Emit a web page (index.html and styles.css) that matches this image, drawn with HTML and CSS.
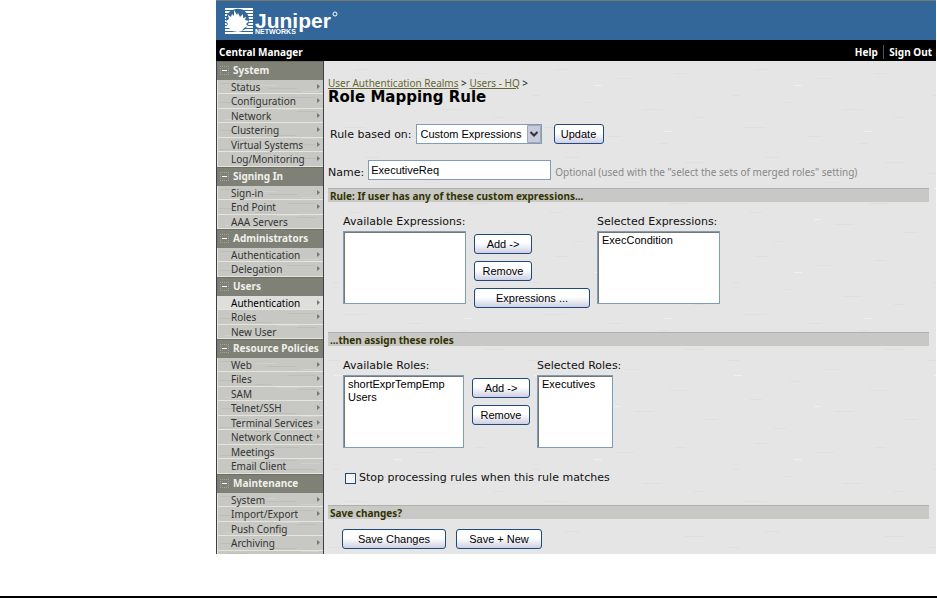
FILE: index.html
```html
<!DOCTYPE html>
<html lang="en">
<head>
    <meta charset="UTF-8">
    <meta name="viewport" content="width=device-width, initial-scale=1.0">
    <title>Central Manager - Role Mapping Rule</title>
    <link rel="stylesheet" href="styles.css">
</head>
<body>
    <div class="app">
        <header class="brand">
            <svg class="logo" width="118" height="32" viewBox="0 0 118 32" role="img" aria-label="Juniper Networks">
                <path fill="#fff" d="M0 2h28v2H0zM0 5h28v2H0zM0 8h28v2H0zM0 11h28v2H0zM0 14h28v2H0zM0 17h28v2H0zM0 20h28v2H0zM0 23h28v2H0zM0 26h28v2H0z"/>
                <path fill="#369" d="M11 3c7-1 13 4 13 11 0 5-3 9-7 11H9C4 23 1 19 1 14 1 8 5 4 11 3z"/>
                <path fill="#fff" d="M9 4l3 5 1-2 2 4 3-3 0 4 3-1-1 3 4 1-3 3 2 2-4 2-2 3-4 1-6-1-3-3-3-1 2-3-2-3 3-2-1-4 3 2 1-3 2 2z"/>
                <text x="30" y="22" class="logo-name">Juniper</text>
                <text x="30" y="28" class="logo-sub">NETWORKS</text>
                <circle cx="110" cy="8" r="2" fill="none" stroke="#fff"/>
            </svg>
        </header>
        <div class="topbar">
            <span>Central Manager</span>
            <nav class="toplinks">
                <a href="#">Help</a>
                <a href="#">Sign Out</a>
            </nav>
        </div>
        <div class="columns">
            <nav class="sidebar">
                <h2>System</h2>
                <ul>
                    <li><a class="more" href="#">Status</a></li>
                    <li><a class="more" href="#">Configuration</a></li>
                    <li><a class="more" href="#">Network</a></li>
                    <li><a class="more" href="#">Clustering</a></li>
                    <li><a class="more" href="#">Virtual Systems</a></li>
                    <li><a class="more" href="#">Log/Monitoring</a></li>
                </ul>
                <h2>Signing In</h2>
                <ul>
                    <li><a class="more" href="#">Sign-in</a></li>
                    <li><a class="more" href="#">End Point</a></li>
                    <li><a href="#">AAA Servers</a></li>
                </ul>
                <h2>Administrators</h2>
                <ul>
                    <li><a class="more" href="#">Authentication</a></li>
                    <li><a class="more" href="#">Delegation</a></li>
                </ul>
                <h2>Users</h2>
                <ul>
                    <li class="current"><a class="more" href="#">Authentication</a></li>
                    <li><a class="more" href="#">Roles</a></li>
                    <li><a href="#">New User</a></li>
                </ul>
                <h2>Resource Policies</h2>
                <ul>
                    <li><a class="more" href="#">Web</a></li>
                    <li><a class="more" href="#">Files</a></li>
                    <li><a class="more" href="#">SAM</a></li>
                    <li><a class="more" href="#">Telnet/SSH</a></li>
                    <li><a class="more" href="#">Terminal Services</a></li>
                    <li><a class="more" href="#">Network Connect</a></li>
                    <li><a href="#">Meetings</a></li>
                    <li><a href="#">Email Client</a></li>
                </ul>
                <h2>Maintenance</h2>
                <ul>
                    <li><a class="more" href="#">System</a></li>
                    <li><a class="more" href="#">Import/Export</a></li>
                    <li><a href="#">Push Config</a></li>
                    <li><a class="more" href="#">Archiving</a></li>
                    <li><a class="more" href="#">Troubleshooting</a></li>
                </ul>
            </nav>
            <main class="content">
                <div class="crumbs"><a href="#">User Authentication Realms</a> &gt; <a href="#">Users - HQ</a> &gt;</div>
                <h1>Role Mapping Rule</h1>

                <form>
                    <div class="row based-on">
                        <label for="rule-type">Rule based on:</label>
                        <select id="rule-type" class="dropdown">
                            <option>Custom Expressions</option>
                        </select>
                        <button type="button" class="update">Update</button>
                    </div>
                    <div class="row name">
                        <label for="rule-name">Name:</label>
                        <input type="text" id="rule-name" value="ExecutiveReq">
                        <span class="hint">Optional (used with the "select the sets of merged roles" setting)</span>
                    </div>

                    <h3>Rule: If user has any of these custom expressions...</h3>
                    <div class="picker expressions">
                        <div class="box">
                            <label for="avail-expr">Available Expressions:</label>
                            <select id="avail-expr" multiple></select>
                        </div>
                        <div class="actions">
                            <button type="button">Add -&gt;</button>
                            <button type="button">Remove</button>
                            <button type="button" class="wide">Expressions ...</button>
                        </div>
                        <div class="box">
                            <label for="sel-expr">Selected Expressions:</label>
                            <select id="sel-expr" multiple>
                                <option>ExecCondition</option>
                            </select>
                        </div>
                    </div>

                    <h3>...then assign these roles</h3>
                    <div class="picker roles">
                        <div class="box">
                            <label for="avail-roles">Available Roles:</label>
                            <select id="avail-roles" multiple>
                                <option>shortExprTempEmp</option>
                                <option>Users</option>
                            </select>
                        </div>
                        <div class="actions">
                            <button type="button">Add -&gt;</button>
                            <button type="button">Remove</button>
                        </div>
                        <div class="box">
                            <label for="sel-roles">Selected Roles:</label>
                            <select id="sel-roles" class="narrow" multiple>
                                <option>Executives</option>
                            </select>
                        </div>
                    </div>
                    <div class="row stop">
                        <input type="checkbox" id="stop">
                        <label for="stop">Stop processing rules when this rule matches</label>
                    </div>

                    <h3>Save changes?</h3>
                    <div class="row save">
                        <button type="button" class="save-changes">Save Changes</button>
                        <button type="button" class="save-new">Save + New</button>
                    </div>
                </form>
            </main>
        </div>
    </div>
</body>
</html>
```

FILE: styles.css
```css
* {
    box-sizing: border-box;
}
body {
    margin: 0;
    height: 100vh;
    display: flex;
    flex-direction: column;
    padding-bottom: 42px;
    border-bottom: 2px solid #000;
    background: #fff;
    font-family: "DejaVu Sans", Verdana, sans-serif;
    font-size: 11px;
    color: #111;
}
.app {
    flex: 1;
    min-height: 0;
    margin: 0 1px 0 216px;
    display: flex;
    flex-direction: column;
    overflow: hidden;
}

/* header */
.brand {
    flex: none;
    height: 40px;
    padding: 5px 9px 0;
    border-top: 1px solid #77776b;
    background: #336699;
}
.logo {
    display: block;
}
.logo-name {
    font: bold 21px "Liberation Sans", Arial, sans-serif;
    fill: #fff;
}
.logo-sub {
    font: bold 7px "Liberation Sans", Arial, sans-serif;
    fill: #fff;
}
.topbar {
    flex: none;
    height: 21px;
    padding: 2px 4px 0 3px;
    display: flex;
    justify-content: space-between;
    align-items: center;
    background: #000;
    color: #fff;
    font-family: "Noto Sans", Verdana, sans-serif;
    font-size: 10px;
    font-weight: bold;
}
.toplinks a {
    color: #fff;
    text-decoration: none;
}
.toplinks a + a {
    margin-left: 3px;
    padding-left: 5px;
    border-left: 1px solid #555;
}
.columns {
    flex: 1;
    min-height: 0;
    display: flex;
    overflow: hidden;
}

/* sidebar */
.sidebar {
    flex: none;
    width: 108px;
    border: 1px solid #3a3f4a;
    border-width: 0 1px;
    font-family: "Noto Sans", Verdana, sans-serif;
    font-size: 10px;
}
.sidebar h2 {
    margin: 0;
    height: 19px;
    padding-left: 16px;
    border-top: 1px solid #6d6e64;
    background: #7f8076 url("data:image/svg+xml,%3Csvg xmlns='http://www.w3.org/2000/svg' width='9' height='9'%3E%3Cpath d='M0 .5h9M0 8.500h9M.5 0v9M8.500 0v9' fill='none' stroke='%23a3a49b' stroke-dasharray='1 1'/%3E%3Cpath d='M2 4h5v1H2z' fill='%23fff'/%3E%3C/svg%3E") 3px 4px no-repeat;
    color: #f0f0ec;
    font-size: 10px;
    line-height: 16px;
}
.sidebar ul {
    margin: 0;
    padding: 0;
    list-style: none;
    background: #c7c8c3 url("data:image/svg+xml,%3Csvg xmlns='http://www.w3.org/2000/svg' width='106' height='47'%3E%3Cpath d='M4 3.5h22M50 8.5h30M12 13.5h20M70 17.5h28M2 22.5h16M38 26.5h16M80 31.5h20M14 36.5h20M58 42.5h24' stroke='%23bdbeb9'/%3E%3Cpath d='M40 5.5h20M84 11.5h18M20 19.5h16M60 29.5h22M8 39.5h18' stroke='%23d0d1cc'/%3E%3C/svg%3E");
}
.sidebar li {
    border-bottom: 1px solid #e6e5dc;
    border-left: 1px solid #e6e5dc;
}
.sidebar li:nth-child(even) {
    padding-bottom: 1px;
}
.sidebar .current {
    background: #dededd;
}
.sidebar a {
    display: block;
    height: 13px;
    padding-left: 13px;
    color: #333;
    line-height: 14px;
    text-decoration: none;
    white-space: nowrap;
}
.sidebar .current a {
    color: #000;
}
.sidebar .more {
    background: url("data:image/svg+xml,%3Csvg xmlns='http://www.w3.org/2000/svg' width='3' height='5'%3E%3Cpath d='M0 0l3 2.5L0 5z' fill='%23777870'/%3E%3C/svg%3E") right 3px center no-repeat;
}

/* content */
.content {
    flex: 1;
    min-width: 0;
    padding: 16px 7px 0 4px;
    background: #e5e5e5 url("data:image/svg+xml,%3Csvg xmlns='http://www.w3.org/2000/svg' width='200' height='187'%3E%3Cpath d='M30 8.5h14M92 17.5h18M150 12.5h12M8 34.5h8M60 41.5h9M118 48.5h20M170 56.5h10M20 66.5h22M84 75.5h14M134 82.5h10M40 96.5h16M160 101.5h20M4 112.5h12M100 121.5h16M66 133.5h10M146 142.5h18M26 151.5h12M110 163.5h20M180 171.5h14M50 180.5h12' stroke='%23dfdfdf'/%3E%3Cpath d='M70 24.5h8M140 70.5h8M10 127.5h8M90 158.5h6' stroke='%23efefef'/%3E%3C/svg%3E");
}
.crumbs {
    font-family: "Noto Sans", Verdana, sans-serif;
    font-size: 10px;
    line-height: 12px;
}
.crumbs a {
    color: #666633;
}
h1 {
    margin: 0;
    font-size: 15px;
    line-height: 16px;
    color: #000;
}
h3 {
    margin: 0;
    height: 14px;
    padding-left: 2px;
    border-top: 1px solid #b0b0b0;
    background: #c8c8c6;
    color: #333300;
    font-family: "Noto Sans", Verdana, sans-serif;
    font-size: 10px;
    line-height: 14px;
}
.row {
    display: flex;
    align-items: center;
}
select,
input,
button {
    margin: 0;
    font-family: "Liberation Sans", Arial, sans-serif;
    font-size: 11px;
    color: #000;
}
button {
    height: 20px;
    padding: 0;
    border: 1px solid #1c4a7c;
    border-radius: 3px;
    background: linear-gradient(#fff 45%, #cfcfe2);
    line-height: 16px;
}
.based-on {
    margin-top: 19px;
    padding-left: 2px;
}
.dropdown {
    appearance: none;
    width: 126px;
    height: 20px;
    margin-left: 4px;
    padding: 0 4px;
    border: 1px solid #7f9db9;
    border-radius: 0;
    background: #fff url("data:image/svg+xml,%3Csvg xmlns='http://www.w3.org/2000/svg' width='14' height='18'%3E%3Cpath d='M.5.5h13v17H.5z' fill='%23c9cadb' stroke='%23a3a5bd'/%3E%3Cpath d='M3.5 7L7 10.500 10.500 7' fill='none' stroke='%23333' stroke-width='2'/%3E%3C/svg%3E") right center no-repeat;
}
.update {
    width: 50px;
    margin-left: 12px;
}
.name {
    margin-top: 16px;
}
.name input {
    width: 183px;
    height: 20px;
    margin: 0 4px;
    padding: 0 2px;
    border: 1px solid #7f9db9;
}
.name label,
.hint {
    padding-top: 4px;
}
.hint {
    color: #888;
    font-family: "Noto Sans", Verdana, sans-serif;
    font-size: 10px;
    line-height: 12px;
}
.name + h3 {
    margin-top: 8px;
}

/* list pickers */
.picker {
    display: flex;
    padding: 11px 0 0 15px;
}
.expressions {
    height: 130px;
}
.box label {
    display: block;
    height: 18px;
    line-height: 17px;
    white-space: nowrap;
}
.box select {
    display: block;
    width: 123px;
    height: 73px;
    padding: 2px 1px;
    border: 1px solid #7f9db9;
    border-radius: 0;
    outline: 0;
    background: #fff;
    box-shadow: inset 1px 1px #77776b;
    overflow: hidden;
}
.box option {
    min-height: 13px;
    padding: 0 3px;
    line-height: 13px;
}
.box .narrow {
    width: 76px;
}
.actions {
    display: flex;
    flex-direction: column;
    align-items: flex-start;
    gap: 7px;
    padding: 21px 7px 0 8px;
}
.actions button {
    width: 58px;
}
.actions .wide {
    width: 116px;
}
.roles .box select {
    width: 121px;
}
.roles .box .narrow {
    width: 76px;
}
.stop {
    margin: 22px 0 21px;
    padding-left: 17px;
    gap: 3px;
}
.stop input {
    appearance: none;
    width: 11px;
    height: 11px;
    margin-top: 3px;
    border: 1px solid #1c4a7c;
    background: #f4f4f0;
}
.save {
    gap: 10px;
    padding: 10px 0 0 14px;
}
.save-changes {
    width: 104px;
}
.save-new {
    width: 86px;
}
```
